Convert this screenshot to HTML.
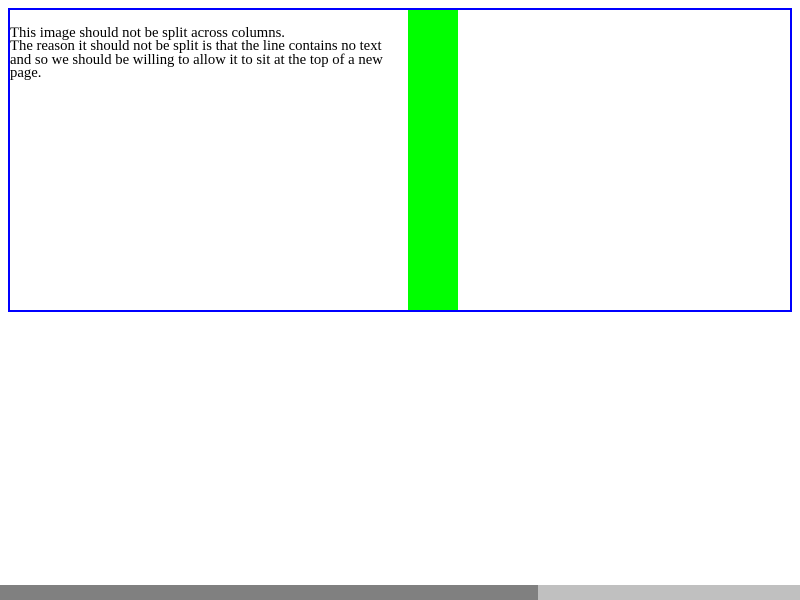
<!DOCTYPE html>
<html><head><style>
html,body{margin:0;padding:0;width:800px;height:600px;overflow:hidden;background:#fff}
.box{position:absolute;left:8px;top:8px;width:780px;height:300px;border:2px solid #0000ff}
.green{position:absolute;left:408px;top:10px;width:50px;height:300px;background:#00ff00}
.txt{position:absolute;left:10px;top:27px;width:400px;white-space:nowrap;font-family:"Liberation Serif",serif;font-size:14.7px;line-height:13.3px;color:#000}
.sb1{position:absolute;left:0;top:585px;width:538px;height:15px;background:#808080}
.sb2{position:absolute;left:538px;top:585px;width:262px;height:15px;background:#c0c0c0}
</style></head><body>
<div class="box"></div>
<div class="green"></div>
<div class="txt">This image should not be split across columns.<br>The reason it should not be split is that the line contains no text<br>and so we should be willing to allow it to sit at the top of a new<br>page.</div>
<div class="sb1"></div><div class="sb2"></div>
</body></html>
